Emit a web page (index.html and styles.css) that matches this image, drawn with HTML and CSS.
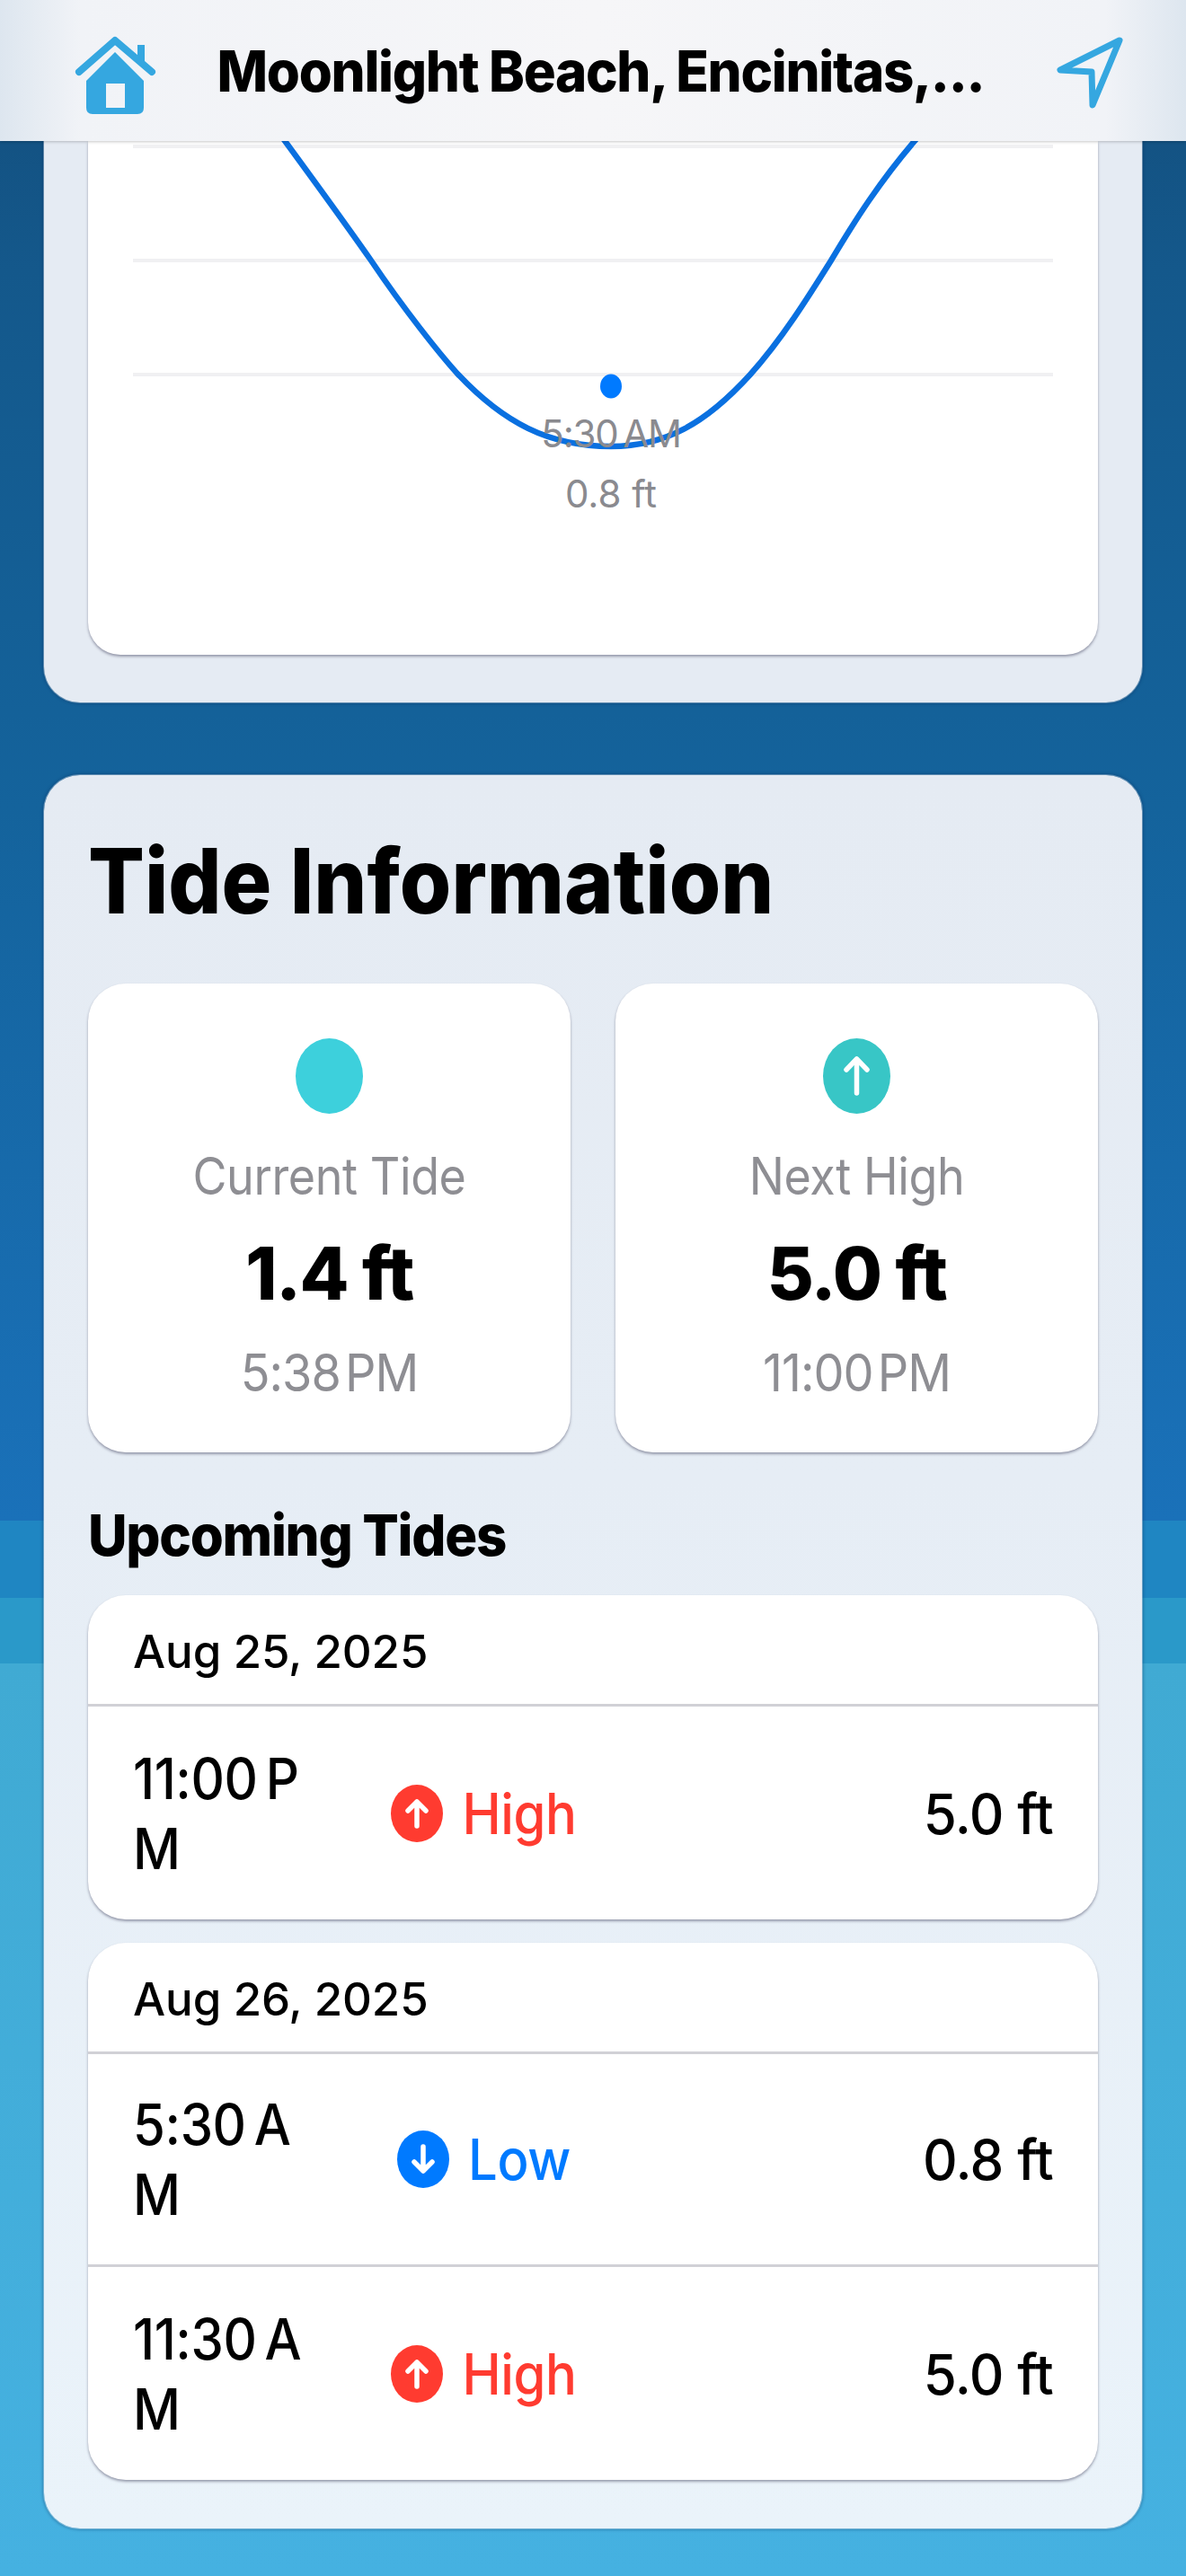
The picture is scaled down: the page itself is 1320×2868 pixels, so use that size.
FILE: index.html
```html
<!DOCTYPE html>
<html lang="en">
<head>
<meta charset="utf-8">
<title>Moonlight Beach Tides</title>
<link rel="stylesheet" href="styles.css">
</head>
<body>
<div class="page">
  <header class="topbar">
    <svg class="home-icon" viewBox="80 36 100 96" aria-hidden="true">
      <path class="home-body" fill-rule="evenodd" d="M128 58 L160 90 V120 Q160 127 153 127 H103 Q96 127 96 120 V90 Z M118 93 V120 H139 V93 Z"/>
      <path class="home-roof" d="M88 80 L128 45 L169 80"/>
      <rect class="home-chimney" x="153" y="50" width="8" height="20"/>
    </svg>
    <h1 class="place">Moonlight Beach, Encinitas,...</h1>
    <svg class="nav-icon" viewBox="1170 38 80 86" aria-hidden="true">
      <path d="M1243 45 L1177 78 L1212 80 L1213 117 Z"/>
    </svg>
  </header>
  <main class="content">
    <section class="panel panel-chart">
      <div class="chart-card">
        <svg class="chart" viewBox="98 157 1124 572" aria-label="Tide chart">
          <rect class="gridline" x="148" y="161" width="1024" height="4"/>
          <rect class="gridline" x="148" y="288" width="1024" height="4"/>
          <rect class="gridline" x="148" y="415" width="1024" height="4"/>
          <path class="curve" d="M312 150 C345 195 385 250 413 290 C450 345 490 395 510 417 C560 470 610 497 680 497 C740 497 785 472 835 417 C870 378 900 330 925 290 C950 248 980 200 1024 150"/>
          <ellipse class="dot" cx="680" cy="430" rx="12" ry="13.5"/>
          <text class="chart-label" x="680" y="498" text-anchor="middle">5:30 AM</text>
          <text class="chart-label chart-label-height" x="680" y="565" text-anchor="middle">0.8 ft</text>
        </svg>
      </div>
    </section>

    <section class="panel panel-info">
      <h2 class="section-title">Tide Information</h2>
      <div class="stats">
        <article class="stat">
          <svg class="stat-icon" viewBox="0 0 75 84" aria-hidden="true"><ellipse class="fill-current" cx="37.5" cy="42" rx="37.5" ry="42"/></svg>
          <div class="stat-label">Current Tide</div>
          <div class="stat-value">1.4 ft</div>
          <div class="stat-time">5:38 PM</div>
        </article>
        <article class="stat">
          <svg class="stat-icon" viewBox="0 0 75 84" aria-hidden="true"><ellipse class="fill-next" cx="37.5" cy="42" rx="37.5" ry="42"/><path class="arrow" d="M37.5 61V23M26 35L37.5 23L49 35"/></svg>
          <div class="stat-label">Next High</div>
          <div class="stat-value">5.0 ft</div>
          <div class="stat-time">11:00 PM</div>
        </article>
      </div>

      <h3 class="upcoming-title">Upcoming Tides</h3>

      <div class="day">
        <div class="day-date">Aug 25, 2025</div>
        <div class="tide-row">
          <div class="tide-time">11:00 PM</div>
          <div class="tide-type high">
            <svg class="type-icon" viewBox="0 0 58 64" aria-hidden="true"><ellipse class="fill-high" cx="29" cy="32" rx="29" ry="32"/><path class="arrow" d="M29 46V19M19 29L29 19L39 29"/></svg>
            <span class="type-name">High</span>
          </div>
          <div class="tide-height">5.0 ft</div>
        </div>
      </div>

      <div class="day">
        <div class="day-date">Aug 26, 2025</div>
        <div class="tide-row">
          <div class="tide-time">5:30 AM</div>
          <div class="tide-type low">
            <svg class="type-icon" viewBox="0 0 58 64" aria-hidden="true"><ellipse class="fill-low" cx="29" cy="32" rx="29" ry="32"/><path class="arrow" d="M29 18V45M19 35L29 45L39 35"/></svg>
            <span class="type-name">Low</span>
          </div>
          <div class="tide-height">0.8 ft</div>
        </div>
        <div class="tide-row">
          <div class="tide-time">11:30 AM</div>
          <div class="tide-type high">
            <svg class="type-icon" viewBox="0 0 58 64" aria-hidden="true"><ellipse class="fill-high" cx="29" cy="32" rx="29" ry="32"/><path class="arrow" d="M29 46V19M19 29L29 19L39 29"/></svg>
            <span class="type-name">High</span>
          </div>
          <div class="tide-height">5.0 ft</div>
        </div>
      </div>
    </section>
  </main>
</div>
</body>
</html>
```

FILE: styles.css
```css
* { box-sizing: border-box; margin: 0; padding: 0; }
html, body { width: 1320px; height: 2868px; overflow: hidden; }
body { font-family: Inter, "Liberation Sans", sans-serif; color: #000; }

.page {
  width: 1320px;
  height: 2868px;
  display: flex;
  flex-direction: column;
  background: linear-gradient(180deg,
    #134d7b 0, #14588b 300px, #14639c 900px, #1a71b9 1693px,
    #1f86c2 1693px, #1f86c2 1779px,
    #2a99c9 1779px, #2a99c9 1852px,
    #40aad3 1852px, #45b1e1 2868px);
}

.topbar {
  height: 157px;
  flex: none;
  display: flex;
  align-items: center;
  padding: 0 67px 0 80px;
  position: relative;
  z-index: 2;
  background: linear-gradient(90deg, #dde6ef 0, #f1f3f7 90px, #f6f6f8 660px, #f1f3f7 1230px, #dde6ef 1320px);
  box-shadow: 0 1px 3px rgba(0, 0, 0, .22);
}
.home-icon { width: 100px; height: 96px; flex: none; margin-top: 11px; }
.home-body { fill: #35a7e0; }
.home-roof { fill: none; stroke: #35a7e0; stroke-width: 8; stroke-linecap: round; stroke-linejoin: round; }
.home-chimney { fill: #35a7e0; }
.nav-icon { width: 80px; height: 86px; flex: none; margin-top: 5px; }
.nav-icon path { fill: none; stroke: #35a7e0; stroke-width: 7; stroke-linejoin: round; }
.place {
  flex: 1;
  margin-right: 16px;
  text-align: center;
  font-size: 60px;
  font-weight: 800;
  letter-spacing: -1.3px;
  white-space: nowrap;
  transform: scaleY(1.05);
}

.content { flex: 1; padding: 0 49px; }

.panel { box-shadow: 0 0 0 1px rgba(255, 255, 255, .35), 0 0 3px 2px rgba(0, 40, 90, .3); }
.panel-chart { height: 625px; border-radius: 0 0 40px 40px; margin-bottom: 81px; padding: 0 49px; background: #e5ebf3; }
.chart-card {
  height: 572px;
  background: #fff;
  border-radius: 0 0 36px 36px;
  box-shadow: 0 2px 3px rgba(50, 50, 80, .45);
  overflow: hidden;
}
.chart { display: block; width: 1124px; height: 572px; }
.gridline { fill: #f0f0f2; }
.curve { fill: none; stroke: #0a70e0; stroke-width: 6.5; }
.dot { fill: #007aff; }
.chart-label { font-size: 42px; fill: #8a8a8f; letter-spacing: -1.2px; word-spacing: -5px; }
.chart-label-height { letter-spacing: 0; word-spacing: 0; }

.panel-info {
  height: 1952px;
  border-radius: 40px;
  padding: 67px 49px 54px;
  background: linear-gradient(180deg, #e5ebf3 0, #e6edf5 40%, #eaf3fa 100%);
}
.section-title { font-size: 93px; line-height: 100px; font-weight: 800; margin-bottom: 65px; transform: scaleY(1.08); transform-origin: left center; }

.stats { display: grid; grid-template-columns: 537px 537px; gap: 50px; }
.stat {
  height: 522px;
  background: #fff;
  border-radius: 42px;
  box-shadow: 0 2px 3px rgba(50, 50, 80, .45);
  padding-top: 61px;
  display: flex;
  flex-direction: column;
  align-items: center;
}
.stat-icon { width: 75px; height: 84px; flex: none; }
.fill-current { fill: #3dd0dc; }
.fill-next { fill: #38c6c6; }
.fill-high { fill: #ff3b30; }
.fill-low { fill: #007aff; }
.arrow { fill: none; stroke: #fff; stroke-width: 5.5; stroke-linecap: round; stroke-linejoin: round; }
.stat-label { margin-top: 40px; height: 60px; line-height: 60px; font-size: 52px; color: #8e8e93; letter-spacing: -.4px; transform: scaleY(1.1); }
.stat-value { margin-top: 37px; height: 80px; line-height: 80px; font-size: 80px; font-weight: 800; letter-spacing: -1.6px; transform: scaleY(1.02); }
.stat-time { margin-top: 41px; height: 60px; line-height: 60px; font-size: 54px; color: #8e8e93; letter-spacing: -1px; word-spacing: -9px; transform: scaleY(1.08); }

.upcoming-title { margin-top: 62px; margin-bottom: 37px; height: 60px; line-height: 60px; font-size: 60px; font-weight: 800; letter-spacing: -1.3px; transform: scaleY(1.06); transform-origin: left center; }

.day {
  background: #fff;
  border-radius: 42px;
  box-shadow: 0 2px 3px rgba(50, 50, 80, .45);
  margin-bottom: 26px;
}
.day:last-child { margin-bottom: 0; }
.day-date {
  height: 124px;
  padding: 4px 50px 0;
  display: flex;
  align-items: center;
  border-bottom: 3px solid #d1d1d6;
  font-size: 51px;
  font-weight: 500;
  letter-spacing: -.1px;
}
.tide-row {
  height: 237px;
  padding: 0 50px;
  display: grid;
  grid-template-columns: 195px 391px 1fr;
  align-items: center;
  border-bottom: 3px solid #d1d1d6;
}
.tide-row:last-child { border-bottom: 0; }
.tide-time { font-size: 58px; line-height: 72px; font-weight: 500; letter-spacing: -.4px; word-spacing: -6px; word-break: break-all; transform: scaleY(1.08); transform-origin: left center; }
.tide-type { display: flex; align-items: center; justify-content: center; gap: 21px; }
.type-icon { width: 58px; height: 64px; flex: none; }
.type-name { font-size: 58px; line-height: 72px; font-weight: 500; letter-spacing: -.4px; transform: scaleY(1.08); }
.high .type-name { color: #ff3b30; }
.low .type-name { color: #007aff; }
.tide-height { text-align: right; font-size: 60px; line-height: 72px; font-weight: 500; letter-spacing: -.6px; transform: scaleY(1.04); transform-origin: right center; }
```
